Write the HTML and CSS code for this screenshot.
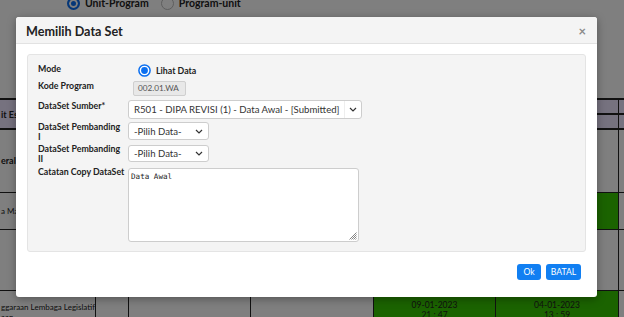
FILE: index.html
```html
<!DOCTYPE html>
<html>
<head>
<meta charset="utf-8">
<link rel="stylesheet" href="styles.css">
</head>
<body>
<div class="page">
  <div class="topbar">
    <div class="modes">
      <span class="bg-radio on"></span><span class="bg-label">Unit-Program</span>
      <span class="bg-radio"></span><span class="bg-label">Program-unit</span>
    </div>
    <div class="tabbox"></div>
  </div>
  <table class="grid">
    <colgroup>
      <col class="c1"><col class="c2"><col class="c3"><col class="c4"><col class="c5"><col class="c6"><col class="c7">
    </colgroup>
    <tr class="h1">
      <th rowspan="2" class="lead">it Eselon I</th><th rowspan="2"></th><th rowspan="2"></th><th rowspan="2"></th><th rowspan="2"></th><th></th><th></th>
    </tr>
    <tr class="h2"><th></th><th></th></tr>
    <tr class="r1"><td class="lead bold">eral</td><td></td><td></td><td></td><td></td><td></td><td></td></tr>
    <tr class="r2"><td class="lead">a Mahkamah</td><td></td><td></td><td></td><td></td><td class="green"></td><td></td></tr>
    <tr class="r3"><td class="lead"></td><td></td><td></td><td></td><td></td><td></td><td></td></tr>
    <tr class="r4"><td class="lead small">ggaraan Lembaga Legislatif<br>aan</td><td></td><td></td><td></td><td class="green date">09-01-2023<br>21 : 47</td><td class="green date">04-01-2023<br>13 : 59</td><td></td></tr>
  </table>
</div>
<div class="backdrop"></div>
<div class="modal">
  <div class="modal-header">
    <h4 class="modal-title">Memilih Data Set</h4>
    <span class="close">×</span>
  </div>
  <div class="modal-body">
    <div class="well">
      <div class="row row-mode">
        <div class="label">Mode</div>
        <div class="field">
          <span class="radio"><svg width="13" height="13" viewBox="0 0 13 13"><circle cx="6.5" cy="6.5" r="5.6" fill="#fff" stroke="#0b6ff0" stroke-width="1.5"/><circle cx="6.5" cy="6.5" r="3.4" fill="#0b6ff0"/></svg></span>
          <span class="radio-text">Lihat Data</span>
        </div>
      </div>
      <div class="row row-kode">
        <div class="label">Kode Program</div>
        <div class="field"><div class="input-ro">002.01.WA</div></div>
      </div>
      <div class="row row-sumber">
        <div class="label">DataSet Sumber*</div>
        <div class="field">
          <div class="select wide"><span class="sel-text">R501 - DIPA REVISI (1) - Data Awal - [Submitted]</span><span class="chev sep"><svg width="8" height="5" viewBox="0 0 8 5"><path d="M1 1 L4 4 L7 1" fill="none" stroke="#333" stroke-width="1.2"/></svg></span></div>
        </div>
      </div>
      <div class="row row-p1">
        <div class="label two">DataSet Pembanding I</div>
        <div class="field">
          <div class="select narrow"><span class="sel-text">-Pilih Data-</span><span class="chev"><svg width="8" height="5" viewBox="0 0 8 5"><path d="M1 1 L4 4 L7 1" fill="none" stroke="#333" stroke-width="1.2"/></svg></span></div>
        </div>
      </div>
      <div class="row row-p2">
        <div class="label two">DataSet Pembanding II</div>
        <div class="field">
          <div class="select narrow short"><span class="sel-text">-Pilih Data-</span><span class="chev"><svg width="8" height="5" viewBox="0 0 8 5"><path d="M1 1 L4 4 L7 1" fill="none" stroke="#333" stroke-width="1.2"/></svg></span></div>
        </div>
      </div>
      <div class="row row-cat">
        <div class="label">Catatan Copy DataSet</div>
        <div class="field">
          <div class="textarea">Data Awal<svg class="grip" width="9" height="9" viewBox="0 0 9 9"><path d="M8.5 1.5 L1.5 8.5 M8.5 3.5 L3.5 8.5 M8.5 5.5 L5.5 8.5 M8.5 7.5 L7.5 8.5" stroke="#666" stroke-width="0.8"/></svg></div>
        </div>
      </div>
    </div>
  </div>
  <div class="modal-footer">
    <button class="btn">Ok</button>
    <button class="btn">BATAL</button>
  </div>
</div>
</body>
</html>
```
FILE: styles.css
```css
* { box-sizing: border-box; }
html, body { margin: 0; padding: 0; }
body {
  width: 624px;
  height: 317px;
  overflow: hidden;
  background: #fff;
  font-family: Lato, "Noto Sans", sans-serif;
  position: relative;
}

/* background page */
.page { width: 624px; height: 317px; overflow: hidden; }
.topbar { height: 102px; }
.modes {
  display: flex;
  align-items: center;
  height: 14px;
  margin-top: -4px;
  padding-left: 67px;
  font-size: 10.5px;
  font-weight: 700;
  color: #222;
}
.bg-radio {
  width: 13px; height: 13px; border-radius: 50%;
  border: 1px solid #bbb; background: #fff;
  margin-right: 5px;
}
.bg-radio.on { border: 2px solid #0b6ff0; box-shadow: inset 0 0 0 2px #fff; background: #0b6ff0; }
.bg-label { margin-right: 12px; }
.tabbox {
  margin: 7px 0 0 17px;
  width: 46px; height: 24px;
  border: 1px solid #aaa;
  border-radius: 4px;
}

.grid {
  border-collapse: collapse;
  table-layout: fixed;
  width: 706px;
  margin-left: -3px;
  font-size: 8px;
  color: #222;
}
.grid col.c1 { width: 98px; }
.grid col.c2 { width: 33px; }
.grid col.c3 { width: 122px; }
.grid col.c4 { width: 123px; }
.grid col.c5 { width: 122px; }
.grid col.c6 { width: 123px; }
.grid col.c7 { width: 85px; }
.grid th, .grid td {
  border: 1px solid #222;
  padding: 0;
  overflow: hidden;
  white-space: nowrap;
}
.grid th { background: #ece4ff; border-width: 2px 1px; font-weight: 700; font-size: 9px; text-align: left; }
.grid .lead { padding-left: 3px; text-align: left; }
.grid .bold { font-weight: 700; font-size: 9px; }
.grid .h1 { height: 15px; }
.grid .h2 { height: 15px; }
.grid .r1 { height: 63px; }
.grid .r2 { height: 37px; }
.grid .r3 { height: 61px; }
.grid .r4 { height: 40px; vertical-align: top; }
.grid td.green { background: #36c600; }
.grid td.date { text-align: center; line-height: 10px; padding-top: 9px; font-size: 8.5px; }
.grid td.small { line-height: 10px; padding-top: 11px; font-size: 8px; }

.backdrop {
  position: absolute;
  inset: 0;
  background: rgba(0, 0, 0, 0.5);
}

/* modal */
.modal {
  position: absolute;
  left: 16px;
  top: 17px;
  width: 581px;
  height: 280px;
  background: #fff;
  border-radius: 3px;
  box-shadow: 0 2px 8px rgba(0,0,0,0.35);
  display: flex;
  flex-direction: column;
}
.modal-header {
  height: 27px;
  background: #f4f4f4;
  border-bottom: 1px solid #e2e2e2;
  border-radius: 3px 3px 0 0;
  display: flex;
  align-items: center;
  justify-content: space-between;
  padding: 2px 10px 0 10px;
}
.modal-title {
  margin: 0;
  font-size: 12.6px;
  font-weight: 700;
  color: #222;
}
.close {
  font-size: 13px;
  font-weight: 700;
  color: #8a8a8a;
  line-height: 1;
  margin-right: 1px;
}
.modal-body { padding: 10px 11px 0 11px; }
.well {
  height: 198px;
  background: #f4f4f4;
  border: 1px solid #e4e4e4;
  border-radius: 3px;
  padding: 7px 10px 0 10px;
}
.row { display: flex; align-items: flex-start; }
.label {
  width: 90px;
  flex: none;
  padding-right: 5px;
  font-size: 8.8px;
  font-weight: 700;
  color: #222;
  line-height: 10px;
}
.field { display: flex; align-items: center; }

.row-mode { height: 16px; margin-bottom: 3px; }
.row-mode .label { padding-top: 2px; }
.row-mode .field { height: 16px; padding-left: 10px; }
.radio { display: flex; width: 13px; height: 13px; }
.radio-text { font-size: 8.8px; font-weight: 700; color: #222; margin-left: 5px; }

.row-kode { height: 15px; margin-bottom: 4px; }
.input-ro {
  margin-left: 5px;
  width: 53px; height: 15px;
  background: #e8e8e8;
  border: 1px solid #cfcfcf;
  border-radius: 2px;
  font-size: 8.2px;
  color: #555;
  padding-left: 4px;
  line-height: 13px;
}

.select {
  display: flex;
  align-items: center;
  justify-content: space-between;
  background: #fff;
  border: 1px solid #cdcdcd;
  border-radius: 3px;
  font-size: 9.6px;
  color: #333;
  padding-left: 5px;
  white-space: nowrap;
}
.select.wide { width: 234px; height: 19px; }
.select.narrow { width: 81px; height: 18px; }
.select.short { height: 17px; }
.chev { display: flex; align-items: center; justify-content: center; width: 18px; height: 100%; }
.chev.sep { border-left: 1px solid #eee; width: 17px; }
.row-sumber { height: 19px; margin-bottom: 3px; }
.row-sumber .label { padding-top: 1px; }
.row-p1 { height: 18px; margin-bottom: 5px; }
.row-p2 { height: 17px; margin-bottom: 6px; }
.row-p2 .label { margin-top: -1px; }
.row-cat .label { margin-top: -1px; white-space: nowrap; }

.textarea {
  position: relative;
  width: 231px; height: 74px;
  background: #fff;
  border: 1px solid #cdcdcd;
  border-radius: 3px;
  font-family: "DejaVu Sans Mono", "Liberation Mono", monospace;
  font-size: 7.6px;
  color: #222;
  padding: 3px 2px;
}
.grip { position: absolute; right: 1px; bottom: 1px; }

.modal-footer {
  display: flex;
  justify-content: flex-end;
  gap: 5px;
  padding: 12px 16px 0 0;
}
.btn {
  height: 16px;
  border: none;
  border-radius: 3px;
  background: #117ff2;
  color: #fff;
  font-family: Lato, sans-serif;
  font-size: 8.6px;
  padding: 0 6px;
  line-height: 16px;
}
.btn:first-child { width: 24px; padding: 0; }
.btn:last-child { width: 35px; padding: 0; }
```
